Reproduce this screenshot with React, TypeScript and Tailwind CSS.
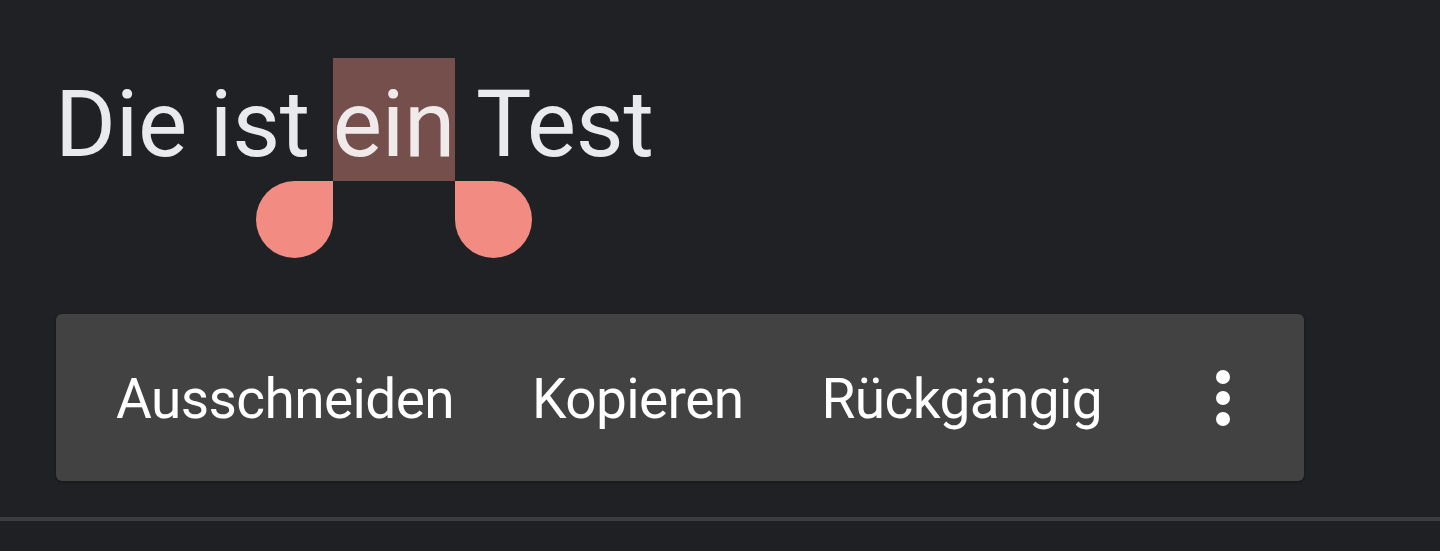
import React from "react";

const Handle = ({ side }: { side: "left" | "right" }) => (
  <span
    className={
      side === "left"
        ? "absolute top-full right-full w-[77px] h-[77px] rounded-full rounded-tr-none bg-[#f28b82]"
        : "absolute top-full left-full w-[77px] h-[77px] rounded-full rounded-tl-none bg-[#f28b82]"
    }
  />
);

const App = () => {
  const actions = ["Ausschneiden", "Kopieren", "Rückgängig"];

  return (
    <div className="w-full h-[551px] bg-[#202124] flex flex-col font-['Roboto',sans-serif] overflow-hidden">
      <div className="pt-[58px] pl-[55px] text-[93px] leading-[133px] tracking-[-0.3px] text-[#e8eaed] whitespace-nowrap">
        Die ist{" "}
        <span className="relative inline-block h-[123px] bg-[#754f4b] text-[#f1eaea]">
          ein
          <Handle side="left" />
          <Handle side="right" />
        </span>{" "}
        Test
      </div>

      <div className="mt-[123px] ml-[56px] w-[1248px] h-[167px] shrink-0 rounded-md bg-[#424242] shadow-[0_1px_3px_rgba(0,0,0,0.4)] flex items-center pl-[60px] text-[55px] tracking-[-0.6px] text-white">
        <div className="flex items-center gap-[78px] pt-[4px]">
          {actions.map((a) => (
            <span key={a} className="leading-none">
              {a}
            </span>
          ))}
        </div>
        <div className="ml-[114px] flex flex-col gap-[7px]">
          <span className="w-[14px] h-[14px] rounded-full bg-white" />
          <span className="w-[14px] h-[14px] rounded-full bg-white" />
          <span className="w-[14px] h-[14px] rounded-full bg-white" />
        </div>
      </div>

      <div className="mt-[36px] h-[4px] shrink-0 bg-[#3c3d40]" />
      <div className="flex-1 bg-[#1f2023]" />
    </div>
  );
};

export default App;
